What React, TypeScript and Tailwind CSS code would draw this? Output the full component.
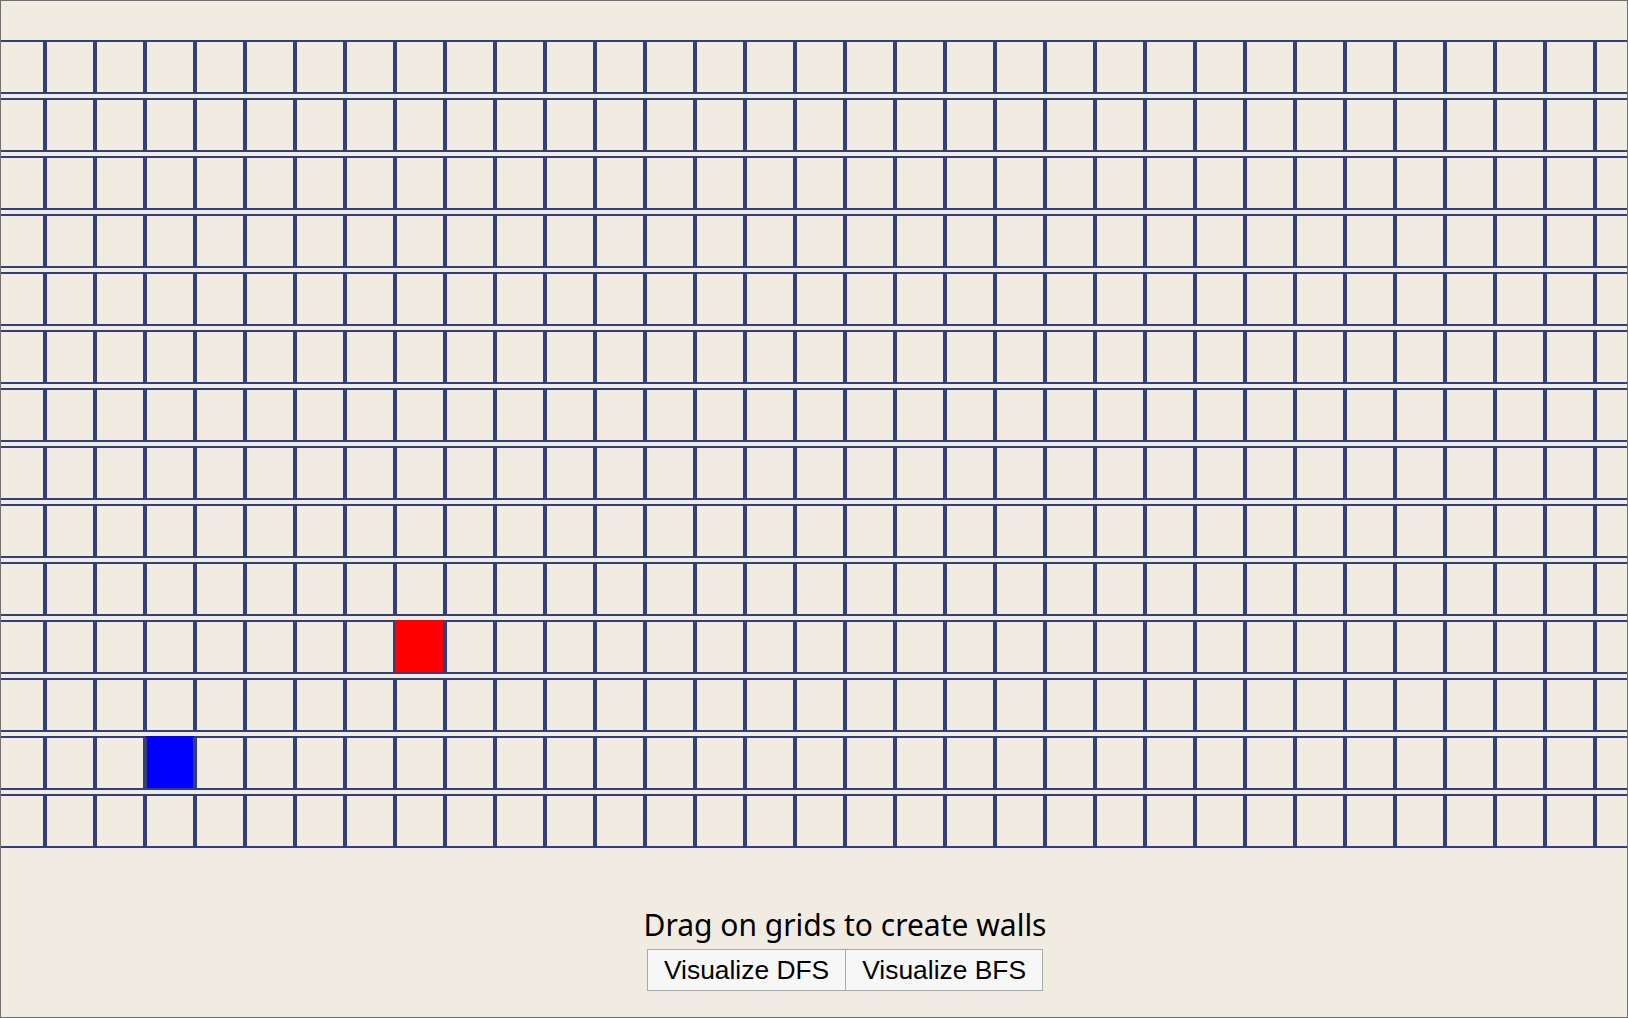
const ROWS = 14;
const COLS = 34;

const start = { r: 12, c: 3 };
const end = { r: 10, c: 8 };

function Cell({ r, c }: { r: number; c: number }) {
  if (r === start.r && c === start.c) {
    return (
      <div className="w-[50px] h-[54px] shrink-0 border-2 border-[#333f7b] border-t-[#0000ff] border-l-[#3b3f5e] bg-[#0000ff]" />
    );
  }
  if (r === end.r && c === end.c) {
    return (
      <div className="w-[50px] h-[54px] shrink-0 border-2 border-[#333f7b] border-t-[#ff0000] border-l-[#ff0000] bg-[#ff0000]" />
    );
  }
  return <div className="w-[50px] h-[54px] shrink-0 border-2 border-[#333f7b]" />;
}

export default function App() {
  const rows = Array.from({ length: ROWS }, (_, r) => r);
  const cols = Array.from({ length: COLS }, (_, c) => c);

  return (
    <div className="h-screen w-full overflow-hidden border border-[#6f6f6f] bg-[#f0ece2]">
      <div className="ml-[-6px] w-[1700px] pt-[39px]">
        <div className="flex flex-col gap-[4px]">
          {rows.map((r) => (
            <div key={r} className="flex">
              {cols.map((c) => (
                <Cell key={c} r={r} c={c} />
              ))}
            </div>
          ))}
        </div>

        <div className="mt-[59px] flex w-[1700px] flex-col items-center">
          <p className="text-[30px] leading-[36px] text-black [font-family:'Noto_Sans',sans-serif]">
            Drag on grids to create walls
          </p>
          <div className="mt-[6px] flex">
            <button className="border border-[#a9a9a9] bg-[#f7f7f7] px-[16px] py-[5px] text-[26.4px] leading-[30px] text-black [font-family:'Liberation_Sans',Arial,sans-serif]">
              Visualize DFS
            </button>
            <button className="border border-l-0 border-[#a9a9a9] bg-[#f7f7f7] px-[16px] py-[5px] text-[26.4px] leading-[30px] text-black [font-family:'Liberation_Sans',Arial,sans-serif]">
              Visualize BFS
            </button>
          </div>
        </div>
      </div>
    </div>
  );
}
